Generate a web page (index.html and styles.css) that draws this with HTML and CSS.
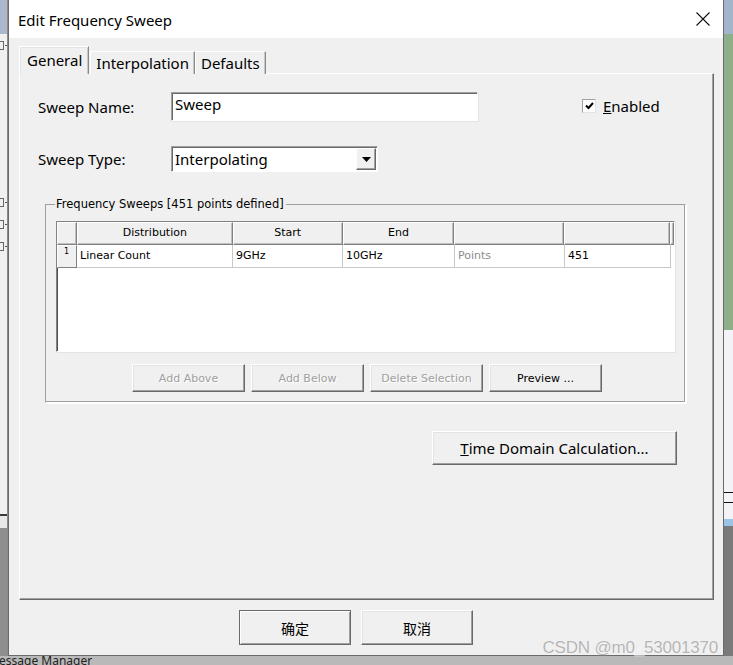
FILE: index.html
```html
<!DOCTYPE html>
<html lang="en">
<head>
  <meta charset="UTF-8" />
  <title>Edit Frequency Sweep</title>
  <link rel="stylesheet" href="styles.css">
</head>
<body>
  <div class="backdrop-left">
    <span class="tree-node n1"></span>
    <span class="tree-node n2"></span>
    <span class="tree-node n3"></span>
    <span class="tree-node n4"></span>
  </div>
  <div class="backdrop-right"></div>
  <div class="backdrop-bottom">essage Manager</div>

  <div class="dialog">
    <div class="titlebar">
      <span class="title">Edit Frequency Sweep</span>
      <svg class="close" width="14" height="14" viewBox="0 0 14 14"><path d="M0.5 0.5 L13.5 13.5 M13.5 0.5 L0.5 13.5" stroke="#111" stroke-width="1.1" fill="none"/></svg>
    </div>

    <div class="dialog-body">
      <div class="tabs">
        <div class="tab active">General</div>
        <div class="tab">Interpolation</div>
        <div class="tab">Defaults</div>
      </div>

      <div class="panel">
        <div class="form-row first">
          <label class="label">Sweep Name:</label>
          <div class="textbox">Sweep</div>
          <div class="check">
            <span class="checkbox">
              <svg width="9" height="8" viewBox="0 0 9 8"><path d="M1 3.5 L3.5 6 L8 1" stroke="#000" stroke-width="2" fill="none"/></svg>
            </span>
            <span><u>E</u>nabled</span>
          </div>
        </div>

        <div class="form-row second">
          <label class="label">Sweep Type:</label>
          <div class="combo">
            <span class="combo-text">Interpolating</span>
            <span class="combo-btn">
              <svg width="9" height="5" viewBox="0 0 9 5"><path d="M0 0 H9 L4.5 5 Z" fill="#000"/></svg>
            </span>
          </div>
        </div>

        <fieldset class="group">
          <legend>Frequency Sweeps [451 points defined]</legend>
          <div class="grid">
            <div class="grid-row head">
              <div class="cell rh"></div>
              <div class="cell c1">Distribution</div>
              <div class="cell c2">Start</div>
              <div class="cell c3">End</div>
              <div class="cell c4"></div>
              <div class="cell c5"></div>
              <div class="cell c6"></div>
            </div>
            <div class="grid-row">
              <div class="cell rh">1</div>
              <div class="cell c1">Linear Count</div>
              <div class="cell c2">9GHz</div>
              <div class="cell c3">10GHz</div>
              <div class="cell c4 muted">Points</div>
              <div class="cell c5">451</div>
            </div>
          </div>
          <div class="grid-buttons">
            <button class="btn small disabled">Add Above</button>
            <button class="btn small disabled">Add Below</button>
            <button class="btn small disabled">Delete Selection</button>
            <button class="btn small">Preview ...</button>
          </div>
        </fieldset>

        <button class="btn time-domain"><u>T</u>ime Domain Calculation...</button>
      </div>

      <div class="dialog-buttons">
        <button class="btn ok">确定</button>
        <button class="btn">取消</button>
      </div>
    </div>
    <div class="watermark">CSDN @m0_53001370</div>
  </div>
</body>
</html>
```

FILE: styles.css
```css
body { margin: 0; width: 733px; height: 665px; overflow: hidden; position: relative; background: #9c9c9c; font-family: 'Noto Sans', sans-serif; }

/* background application peeking out */
.backdrop-left { position: absolute; left: 0; top: 0; width: 8px; height: 656px; border-right: 1px solid #8a8a8a; box-sizing: border-box;
  background: linear-gradient(to bottom, #aab8cc 0 34px, #f0f0f0 34px 514px, #3a3a3a 514px 516px, #e8e8e8 516px 528px, #8e8e8e 528px); }
.tree-node { position: absolute; left: 0; width: 3px; height: 7px; border: 1px solid #666; border-left: none; }
.tree-node::after { content: ""; position: absolute; left: 5px; top: 3px; width: 4px; border-top: 1px dotted #555; }
.n1 { top: 41px; } .n2 { top: 198px; } .n3 { top: 220px; } .n4 { top: 242px; }
.backdrop-right { position: absolute; left: 724px; top: 0; width: 9px; height: 656px;
  background: linear-gradient(to bottom, #a3b5cc 0 34px, #8daf8a 34px 330px, #f3f3f7 330px 492px, #111 492px 493px, #f3f3f7 493px 502px, #111 502px 503px, #f3f3f7 503px 519px, #9cc3e3 519px 526px, #7a7a7a 526px); }
.backdrop-bottom { position: absolute; left: 0; top: 656px; width: 733px; height: 9px; background: #b9b9b9; font-size: 12px; line-height: 9px; color: #222; text-indent: -1px; overflow: hidden; }

/* dialog window */
.dialog { position: absolute; left: 8px; top: 0; width: 716px; height: 656px; box-sizing: border-box; border: 1px solid #6b6b6b; border-top: none; background: #f0f0f0; display: flex; flex-direction: column; }
.titlebar { height: 38px; background: #fff; display: flex; align-items: center; justify-content: space-between; padding: 0 13px 0 9px; flex-shrink: 0; }
.title { font-size: 15px; color: #000; margin-top: 1px; }
.close { margin-top: -1px; }

.dialog-body { padding: 9px 9px 0 10px; flex: 1; display: flex; flex-direction: column; }

.tabs { display: flex; align-items: flex-end; height: 27px; position: relative; z-index: 1; }
.tab { height: 23px; box-sizing: border-box; padding: 0 5px 0 5px; font-size: 15px; line-height: 22px; color: #000; background: #f0f0f0; border: 1px solid #fff; border-bottom: none; border-right: 1px solid #8a8a8a; box-shadow: inset -1px 0 0 #c8c8c8; }
.tab.active { height: 28px; padding: 0 6px 0 7px; line-height: 26px; margin-right: 1px; border-top: 1px solid #fff; box-shadow: inset 1px 1px 0 #e3e3e3, inset -1px 0 0 #c8c8c8; }

.panel { height: 527px; box-sizing: border-box; border: 1px solid #fff; border-right: 1px solid #696969; border-bottom: 1px solid #696969; box-shadow: inset -1px -1px 0 #a0a0a0; margin-top: -1px; padding: 0 0 0 18px; }

.form-row { display: flex; align-items: center; }
.form-row.first { margin-top: 18px; height: 29px; }
.form-row.second { margin-top: 25px; height: 26px; }
.label { width: 133px; font-size: 15px; color: #000; }

.textbox { width: 307px; height: 29px; box-sizing: border-box; background: #fff; border: 1px solid #a0a0a0; border-right-color: #fff; border-bottom-color: #fff; box-shadow: inset 1px 1px 0 #696969, 1px 1px 0 #e3e3e3; font-size: 15px; line-height: 23px; padding-left: 3px; color: #000; }

.check { display: flex; align-items: center; margin-left: 104px; font-size: 15px; gap: 7px; margin-top: -2px; }
.checkbox { width: 14px; height: 14px; box-sizing: border-box; background: #fff; border: 1px solid #a0a0a0; border-right-color: #e3e3e3; border-bottom-color: #e3e3e3; display: flex; align-items: center; justify-content: center; }

.combo { width: 207px; height: 26px; box-sizing: border-box; background: #fff; border: 1px solid #a0a0a0; border-right-color: #fff; border-bottom-color: #fff; box-shadow: inset 1px 1px 0 #696969; display: flex; align-items: center; justify-content: space-between; padding-left: 3px; }
.combo-text { font-size: 15px; color: #000; }
.combo-btn { width: 20px; height: 22px; box-sizing: border-box; margin-right: 1px; background: #f0f0f0; border: 1px solid #fff; border-right-color: #696969; border-bottom-color: #696969; box-shadow: inset -1px -1px 0 #a0a0a0; display: flex; align-items: center; justify-content: center; }

/* group box */
.group { margin: 25px 0 0 7px; width: 641px; height: 206px; box-sizing: border-box; padding: 10px 0 0 10px; border: 1px solid #a0a0a0; border-right-color: #fff; border-bottom-color: #fff; box-shadow: inset -1px -1px 0 #a0a0a0, 1px 1px 0 #fff; font-family: 'DejaVu Sans', sans-serif; }
.group legend { font-size: 11.5px; line-height: 14px; padding: 0 2px 0 1px; margin-left: -1px; color: #000; }

.grid { width: 619px; height: 131px; box-sizing: border-box; background: #fff; border: 1px solid #828282; border-right-color: #fff; border-bottom-color: #fff; box-shadow: inset 1px 1px 0 #505050, 1px 1px 0 #e3e3e3; font-size: 11px; }
.grid-row { display: flex; height: 23px; }
.cell { box-sizing: border-box; height: 100%; border-right: 1px solid #c8c8c8; border-bottom: 1px solid #c8c8c8; padding-left: 3px; line-height: 22px; white-space: nowrap; color: #000; }
.head .cell { background: #f0f0f0; text-align: center; padding: 0; border: 1px solid #fff; border-right-color: #808080; border-bottom-color: #808080; box-shadow: inset -1px -1px 0 #c0c0c0; line-height: 20px; }
.rh { width: 20px; background: #f0f0f0; border: 1px solid #fff; border-right-color: #808080; border-bottom-color: #808080; font-size: 8px; line-height: 12px; padding-left: 6px; }
.c1 { width: 156px; }
.c2 { width: 110px; }
.c3 { width: 112px; }
.c4 { width: 110px; }
.c5 { width: 106px; }
.c6 { width: 4px; }
.muted { color: #8e8e8e; }

.grid-buttons { display: flex; gap: 6px; margin: 12px 0 0 76px; }

/* buttons */
.btn { background: #f0f0f0; border: 1px solid #fff; border-right-color: #696969; border-bottom-color: #696969; box-shadow: inset -1px -1px 0 #a0a0a0, inset 1px 1px 0 #e3e3e3; padding: 0; color: #000; font-family: 'Noto Sans', sans-serif; }
.btn.small { width: 113px; height: 28px; font-family: 'DejaVu Sans', sans-serif; font-size: 11px; }
.btn.disabled { color: #a0a0a0; text-shadow: 1px 1px 0 #fff; }
.btn.time-domain { display: block; width: 245px; height: 34px; margin: 28px 0 0 394px; font-size: 15px; }

.dialog-buttons { display: flex; gap: 10px; margin: 10px 0 0 220px; }
.dialog-buttons .btn { width: 112px; height: 35px; font-family: 'Noto Sans CJK SC', sans-serif; font-size: 14px; }
.dialog-buttons .btn.ok { border: 1px solid #696969; box-shadow: inset 1px 1px 0 #fff, inset -1px -1px 0 #a0a0a0; }

.watermark { position: absolute; right: 5px; bottom: -3px; font-family: 'Liberation Sans', sans-serif; font-size: 17px; color: #b5b5b5; text-shadow: 0 0 1px #fff; letter-spacing: -0.2px; }
```
